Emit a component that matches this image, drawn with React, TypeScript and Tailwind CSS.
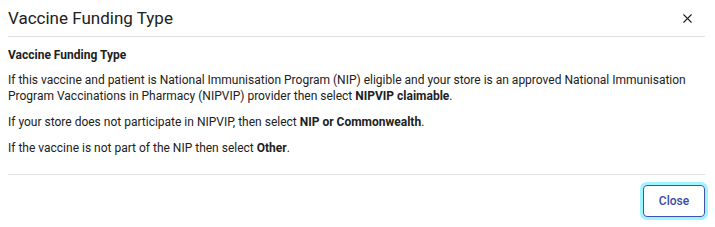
import { X } from 'lucide-react'

export default function App() {
  return (
    <div className="h-[227px] w-[715px] bg-white pl-2 pr-[10px] font-['Roboto',sans-serif] text-[#212121]">
      <header className="flex h-[37px] items-center justify-between border-b border-[#e0e0e0]">
        <h1 className="text-[17px] font-normal leading-none">Vaccine Funding Type</h1>
        <button className="mr-[10px] text-[#212121]" aria-label="Close">
          <X className="h-[15px] w-[15px]" strokeWidth={1.75} />
        </button>
      </header>

      <section className="h-[138px] border-b border-[#e0e0e0] pt-[10px] text-[12px] leading-[16px]">
        <h2 className="font-bold">Vaccine Funding Type</h2>
        <p className="mt-[9px]">
          If this vaccine and patient is National Immunisation Program (NIP) eligible and your store is an approved National Immunisation
          Program Vaccinations in Pharmacy (NIPVIP) provider then select <b>NIPVIP claimable</b>.
        </p>
        <p className="mt-[10px]">
          If your store does not participate in NIPVIP, then select <b>NIP or Commonwealth</b>.
        </p>
        <p className="mt-[10px]">
          If the vaccine is not part of the NIP then select <b>Other</b>.
        </p>
      </section>

      <footer className="flex justify-end pt-[10px]">
        <button className="h-[32px] w-[62px] rounded-[4px] border border-[#3f51b5] text-[12px] font-medium text-[#3949ab] shadow-[0_0_0_3px_#9ff5ff]">
          Close
        </button>
      </footer>
    </div>
  )
}
